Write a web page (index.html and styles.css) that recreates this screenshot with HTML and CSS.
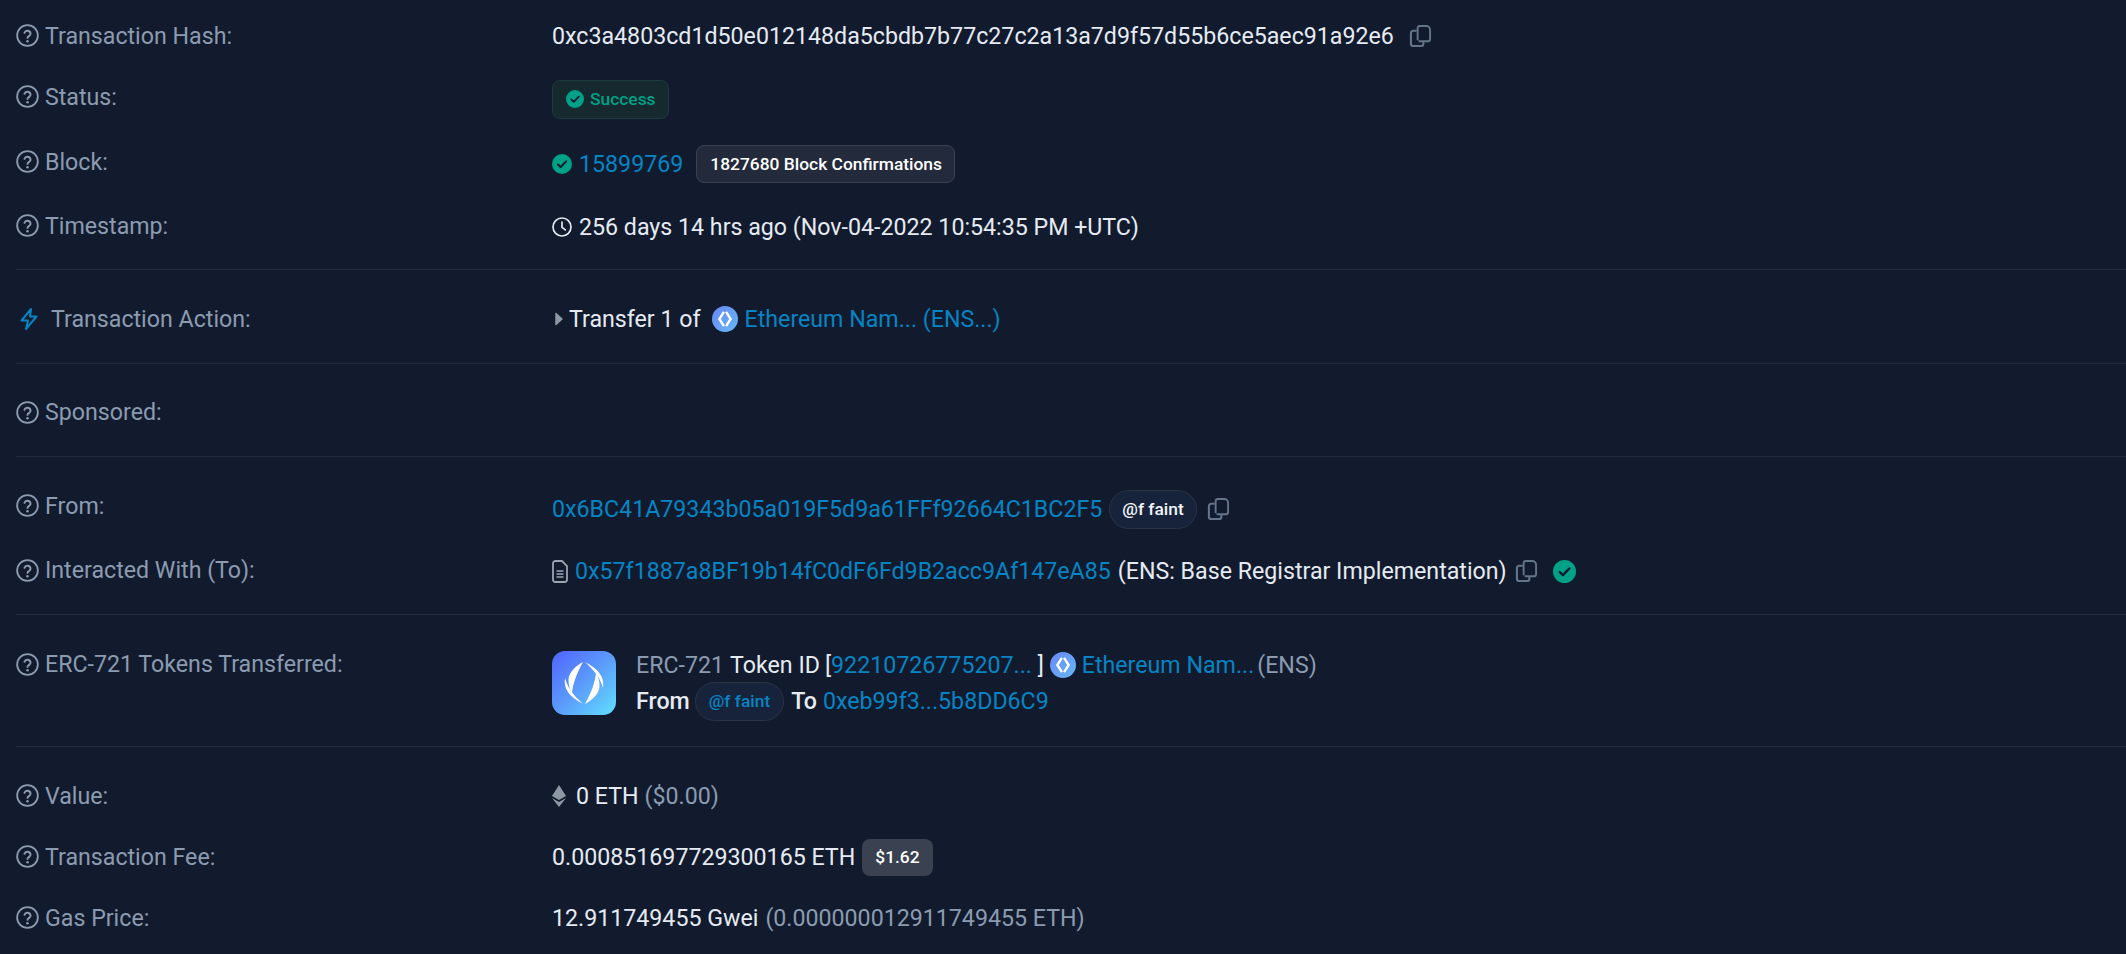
FILE: index.html
```html
<!DOCTYPE html>
<html lang="en">
<head>
<meta charset="utf-8">
<title>Transaction Details</title>
<link rel="stylesheet" href="styles.css">
</head>
<body>
<svg class="defs" width="0" height="0" aria-hidden="true">
  <defs>
    <linearGradient id="ensg" x1="0" y1="0" x2="1" y2="1"><stop offset="0" stop-color="#6a86f2"/><stop offset="1" stop-color="#66b8f8"/></linearGradient>
    <linearGradient id="ensbig" x1="0" y1="0" x2="1" y2="1"><stop offset="0" stop-color="#5163ff"/><stop offset="0.5" stop-color="#5b9bfb"/><stop offset="1" stop-color="#62e0ff"/></linearGradient>
    <symbol id="q" viewBox="0 0 24 24"><circle cx="12" cy="12" r="10.8" fill="none" stroke="currentColor" stroke-width="1.9"/><path d="M8.8 9.2a3.3 3.3 0 0 1 6.4 1c0 2.2-3.2 2.6-3.2 4.3" fill="none" stroke="currentColor" stroke-width="2" stroke-linecap="round"/><circle cx="12" cy="18" r="1.3" fill="currentColor"/></symbol>
    <symbol id="copy" viewBox="0 0 24 24"><path d="M9 16.5V4a2.5 2.5 0 0 1 2.5-2.5H18a4 4 0 0 1 4 4V15a2.5 2.5 0 0 1-2.5 2.500H10" fill="none" stroke="currentColor" stroke-width="2"/><path d="M8 6.500H4.500A2.500 2.500 0 0 0 2 9v11a2.500 2.500 0 0 0 2.500 2.500h8a2.500 2.500 0 0 0 2.500-2.500v-2" fill="none" stroke="currentColor" stroke-width="2.200"/></symbol>
    <symbol id="ok" viewBox="0 0 24 24"><circle cx="12" cy="12" r="12" fill="#00a186"/><path d="M7 12.500l3.300 3.300L17 8.800" fill="none" stroke="#12192c" stroke-width="2.400" stroke-linecap="round" stroke-linejoin="round"/></symbol>
    <symbol id="ens" viewBox="0 0 24 24"><circle cx="12" cy="12" r="12" fill="url(#ensg)"/><path d="M11 5.500L6.800 12l4.200 6.500M13 5.500l4.200 6.500L13 18.500" fill="none" stroke="#fff" stroke-width="2.200"/></symbol>
  </defs>
</svg>
<main class="card">
  <section class="group group-top">
    <div class="row">
      <div class="label label-hash"><svg class="ico"><use href="#q"/></svg>Transaction Hash:</div>
      <div class="value">0xc3a4803cd1d50e012148da5cbdb7b77c27c2a13a7d9f57d55b6ce5aec91a92e6<svg class="copy copy-wide"><use href="#copy"/></svg></div>
    </div>
    <div class="row">
      <div class="label label-status"><svg class="ico"><use href="#q"/></svg>Status:</div>
      <div class="value"><span class="status"><svg class="ok-small"><use href="#ok"/></svg>Success</span></div>
    </div>
    <div class="row row-block">
      <div class="label label-status"><svg class="ico"><use href="#q"/></svg>Block:</div>
      <div class="value"><svg class="vico"><use href="#ok"/></svg><a>15899769</a><span class="confirm">1827680 Block Confirmations</span></div>
    </div>
    <div class="row">
      <div class="label"><svg class="ico"><use href="#q"/></svg>Timestamp:</div>
      <div class="value"><svg class="vico" viewBox="0 0 24 24"><circle cx="12" cy="12" r="10.800" fill="none" stroke="currentColor" stroke-width="2"/><path d="M12 6v6.500l4 3" fill="none" stroke="currentColor" stroke-width="2" stroke-linecap="round" stroke-linejoin="round"/></svg>256 days 14 hrs ago (Nov-04-2022 10:54:35 PM +UTC)</div>
    </div>
  </section>
  <section class="group">
    <div class="row">
      <div class="label label-action"><svg class="bolt" viewBox="0 0 18 22"><path d="M11 1L1.500 12.500H8L6 21 16.500 8.500H10z" fill="none" stroke="#0784c3" stroke-width="2" stroke-linejoin="round"/></svg>Transaction Action:</div>
      <div class="value"><svg class="caret" viewBox="0 0 8 14"><path d="M1 1.500l6 5.500-6 5.500z" fill="#8c98a4" stroke="#8c98a4" stroke-width="1.500" stroke-linejoin="round"/></svg>Transfer 1 of<svg class="ens-small ens-pad"><use href="#ens"/></svg><a>Ethereum Nam... (ENS...)</a></div>
    </div>
  </section>
  <section class="group group-sponsored">
    <div class="row">
      <div class="label label-sponsored"><svg class="ico"><use href="#q"/></svg>Sponsored:</div>
    </div>
  </section>
  <section class="group group-addr">
    <div class="row">
      <div class="label label-from"><svg class="ico"><use href="#q"/></svg>From:</div>
      <div class="value"><a>0x6BC41A79343b05a019F5d9a61FFf92664C1BC2F5</a><span class="pill">@f faint</span><svg class="copy"><use href="#copy"/></svg></div>
    </div>
    <div class="row">
      <div class="label label-to"><svg class="ico"><use href="#q"/></svg>Interacted With (To):</div>
      <div class="value"><svg class="doc" viewBox="0 0 16 23"><path d="M1 3.500a2.500 2.500 0 0 1 2.500-2.500H10l5 5v13.500a2.500 2.500 0 0 1-2.500 2.500h-9A2.500 2.500 0 0 1 1 19.500z" fill="none" stroke="#9aa5b1" stroke-width="1.800"/><path d="M4.500 11h7M4.500 14h7M4.500 17h7" stroke="#9aa5b1" stroke-width="1.600"/></svg><a>0x57f1887a8BF19b14fC0dF6Fd9B2acc9Af147eA85</a><span class="after-link">(ENS: Base Registrar Implementation)</span><svg class="copy copy-to"><use href="#copy"/></svg><svg class="ok-end"><use href="#ok"/></svg></div>
    </div>
  </section>
  <section class="group group-token">
    <div class="row row-token">
      <div class="label"><svg class="ico"><use href="#q"/></svg>ERC-721 Tokens Transferred:</div>
      <div class="value token">
        <svg class="ens-big" viewBox="0 0 64 64"><rect width="64" height="64" rx="13" fill="url(#ensbig)"/><g fill="#fff"><path d="M31 11C25 14 17 21 16.500 28 16.200 33 17.500 38 20 43 20.500 33 25 22 31 11z"/><path d="M13 27C11.500 37 16 45 31 53 24 46 16.500 40 13 27z"/></g><g fill="#fff" transform="rotate(180 32 32)"><path d="M31 11C25 14 17 21 16.500 28 16.200 33 17.500 38 20 43 20.500 33 25 22 31 11z"/><path d="M13 27C11.500 37 16 45 31 53 24 46 16.500 40 13 27z"/></g></svg>
        <div class="token-lines">
          <div class="line"><span class="muted">ERC-721</span><span class="gap">Token ID</span><span class="gap-bracket">[<a>92210726775207...</a> ]</span><svg class="ens-small ens-inline"><use href="#ens"/></svg><a>Ethereum Nam...</a><span class="muted ens-tag">(ENS)</span></div>
          <div class="line"><strong>From</strong><span class="pill pill-link">@f faint</span><strong>To</strong><a class="to-addr">0xeb99f3...5b8DD6C9</a></div>
        </div>
      </div>
    </div>
  </section>
  <section class="group group-last">
    <div class="row">
      <div class="label"><svg class="ico"><use href="#q"/></svg>Value:</div>
      <div class="value"><svg class="eth" viewBox="0 0 14 22"><path d="M7 0L0 11l7 4 7-4z" fill="#8c98a4"/><path d="M0 13l7 9 7-9-7 4z" fill="#8c98a4"/></svg>0 ETH<span class="muted usd-tight">($0.00)</span></div>
    </div>
    <div class="row">
      <div class="label"><svg class="ico"><use href="#q"/></svg>Transaction Fee:</div>
      <div class="value">0.000851697729300165 ETH<span class="fee">$1.62</span></div>
    </div>
    <div class="row">
      <div class="label"><svg class="ico"><use href="#q"/></svg>Gas Price:</div>
      <div class="value">12.911749455 Gwei<span class="muted usd">(0.000000012911749455 ETH)</span></div>
    </div>
  </section>
</main>
</body>
</html>
```
FILE: styles.css
```css
* { box-sizing: border-box; }
html, body { margin: 0; height: 100%; }
body {
  background: #121b2e;
  color: #e6ebf3;
  font-family: Roboto, "Liberation Sans", sans-serif;
  font-size: 23.2px;
  overflow: hidden;
}
.defs { position: absolute; }
a { color: #0784c3; }
.card { padding-left: 16px; }
.group { border-bottom: 1px solid #232b3c; padding: 28px 0 23px; display: flex; flex-direction: column; gap: 22px; }
.group-top { padding: 15px 0 21px; gap: 21px; }
.group-sponsored { padding: 28px 0 22px; }
.group-addr { padding: 31px 0 22px; gap: 20px; }
.group-token { padding: 36px 0 31px; }
.group-last { padding: 28px 0 0; gap: 19px; border-bottom: 0; }
.row { display: flex; min-height: 42px; align-items: center; }
.row-block { margin-top: 2px; }
.row-token { align-items: flex-start; }
.label { width: 536px; flex: none; display: flex; align-items: center; color: #8c9bb0; margin-top: -3px; }
.label-hash { margin-top: -1px; }
.label-status { margin-top: -5px; }
.label-sponsored { margin-top: -2px; }
.label-action { margin-top: 0; }
.label-from { margin-top: -7px; }
.label-to { margin-top: -2px; }
.group-last .label { margin-top: -1px; }
.row-token .label { margin-top: -5px; height: 36px; }
.value { display: flex; align-items: center; white-space: pre; }
.ico { width: 23px; height: 23px; margin-right: 6px; flex: none; color: #8c9bb0; }
.vico { width: 20px; height: 20px; margin-right: 7px; flex: none; }
.copy { width: 23px; height: 24px; color: #64748a; margin-left: 10px; flex: none; }
.copy-wide { margin-left: 15px; }
.copy-to { margin-left: 8px; }
.status { display: inline-flex; align-items: center; height: 39px; padding: 0 12px 0 13px; color: #00a186; background: #15292f; border: 1px solid #1b3b3e; border-radius: 8px; font-size: 17.4px; font-weight: 500; }
.ok-small { width: 18px; height: 18px; margin-right: 6px; }
.confirm { margin-left: 13px; height: 38px; display: inline-flex; align-items: center; padding: 0 12px 0 13px; background: #222a3b; border: 1px solid #3a4252; border-radius: 8px; font-size: 17.4px; font-weight: 500; color: #fff; }
.bolt { width: 18px; height: 22px; margin: 0 13px 0 4px; flex: none; }
.caret { width: 8px; height: 14px; margin: 0 6px 0 3px; flex: none; }
.ens-small { width: 26px; height: 26px; flex: none; }
.ens-pad { margin: 0 7px 0 11px; }
.ens-inline { margin: 0 6px; }
.ens-tag { margin-left: 3px; }
.pill { margin-left: 7px; height: 39px; display: inline-flex; align-items: center; padding: 0 12px; background: #17233a; border: 1px solid #2b3445; border-radius: 20px; font-size: 17.4px; font-weight: 500; color: #f1f4f8; }
.pill-link { color: #0784c3; margin: 0 7px 0 5px; padding: 0 13px; }
.doc { width: 16px; height: 23px; margin-right: 7px; flex: none; }
.after-link { margin-left: 7px; }
.ok-end { width: 23px; height: 23px; margin-left: 15px; flex: none; }
.token { align-items: flex-start; }
.ens-big { width: 64px; height: 64px; margin-right: 20px; flex: none; }
.token-lines { display: flex; flex-direction: column; margin: -4px 0; }
.line { display: flex; align-items: center; height: 36px; }
.muted { color: #8c9bb0; }
.gap { margin-left: 6px; }
.gap-bracket { margin-left: 5px; }
strong { font-weight: 500; }
.to-addr { margin-left: 6px; }
.eth { width: 14px; height: 22px; margin-right: 10px; flex: none; }
.usd { margin-left: 7px; }
.usd-tight { margin-left: 6px; }
.fee { margin-left: 7px; height: 37px; display: inline-flex; align-items: center; padding: 0 13px; background: #3a4150; border-radius: 8px; font-size: 17.4px; font-weight: 500; color: #fff; }
```
